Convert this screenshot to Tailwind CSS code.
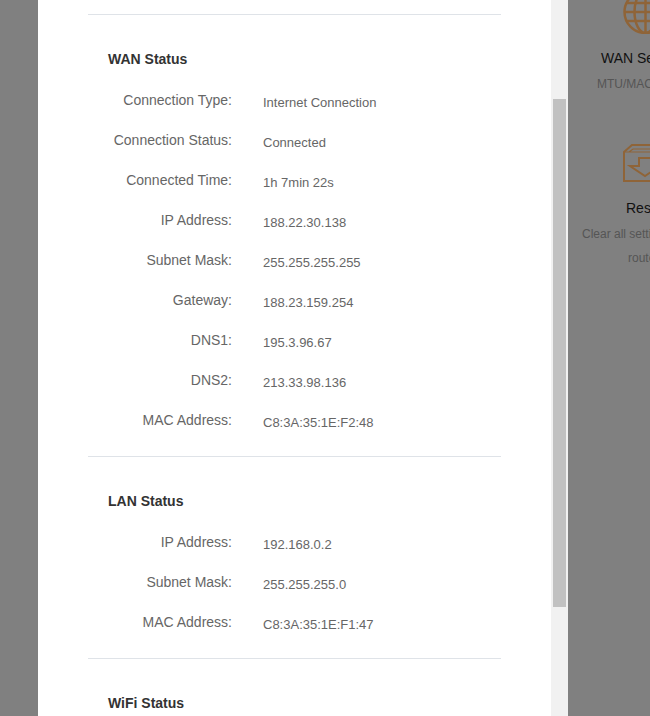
<!DOCTYPE html>
<html lang="en">
<head>
    <meta charset="UTF-8" />
    <script src="https://cdn.jsdelivr.net/npm/@tailwindcss/browser@4"></script>
    <title>Status</title>
</head>
<body class="relative h-[716px] w-[650px] overflow-hidden bg-[#808080] font-['Liberation_Sans',Arial,sans-serif]">
    <!-- dimmed page behind the dialog -->
    <div class="absolute left-[568px] top-0 h-[716px] w-[82px] overflow-hidden">
        <svg class="absolute left-[55px] top-[-18px]" width="46" height="52" viewBox="0 0 46 52" fill="none" stroke="#8f6438" stroke-width="2.5">
            <circle cx="22.5" cy="30" r="21" />
            <ellipse cx="22.5" cy="30" rx="11" ry="21" />
            <path d="M22.5 9v42M1.5 30h42M4 21h37M4 39h37" />
        </svg>
        <p class="absolute left-[33px] top-[50px] whitespace-nowrap text-[14px] leading-[16px] text-[#111]">WAN Settings</p>
        <p class="absolute left-[29px] top-[76px] whitespace-nowrap text-[12px] leading-[16px] text-[#555]">MTU/MAC Clone</p>
        <svg class="absolute left-[55px] top-[144px]" width="44" height="40" viewBox="0 0 44 40" fill="none" stroke="#8f6438" stroke-width="2">
            <path d="M44 1H9L1 8v29h43" />
            <path d="M1 8h43M6 8l4-3h34" stroke-width="1.2" />
            <path d="M16 14h12v8h9L22 32 7 22h9z" />
        </svg>
        <p class="absolute left-[58px] top-[200px] whitespace-nowrap text-[14px] leading-[16px] text-[#111]">Reset</p>
        <p class="absolute left-[14px] top-[226px] whitespace-nowrap text-[12px] leading-[16px] text-[#555]">Clear all settings of the</p>
        <p class="absolute left-[60px] top-[250px] whitespace-nowrap text-[12px] leading-[16px] text-[#555]">router</p>
    </div>

    <!-- dialog -->
    <div class="absolute left-[38px] top-0 flex h-[716px] w-[530px]">
        <div class="h-full w-[513px] bg-white px-[50px] pt-[14px]">
            <section class="border-t border-[#dfe3e8] pl-[20px] pt-[36px]">
                <h2 class="text-[14px] font-bold leading-[16px] text-[#333]">WAN Status</h2>
                <div class="mt-[23px] flex flex-col">
                    <div class="flex h-[40px]"><span class="w-[124px] pt-[2px] text-right text-[14px] leading-[16px] text-[#666]">Connection Type:</span><span class="ml-[31px] pt-[5px] text-[13px] leading-[16px] text-[#666]">Internet Connection</span></div>
                    <div class="flex h-[40px]"><span class="w-[124px] whitespace-nowrap pt-[2px] text-right text-[14px] leading-[16px] text-[#666]">Connection Status:</span><span class="ml-[31px] pt-[5px] text-[13px] leading-[16px] text-[#666]">Connected</span></div>
                    <div class="flex h-[40px]"><span class="w-[124px] pt-[2px] text-right text-[14px] leading-[16px] text-[#666]">Connected Time:</span><span class="ml-[31px] pt-[5px] text-[13px] leading-[16px] text-[#666]">1h 7min 22s</span></div>
                    <div class="flex h-[40px]"><span class="w-[124px] pt-[2px] text-right text-[14px] leading-[16px] text-[#666]">IP Address:</span><span class="ml-[31px] pt-[5px] text-[13px] leading-[16px] text-[#666]">188.22.30.138</span></div>
                    <div class="flex h-[40px]"><span class="w-[124px] pt-[2px] text-right text-[14px] leading-[16px] text-[#666]">Subnet Mask:</span><span class="ml-[31px] pt-[5px] text-[13px] leading-[16px] text-[#666]">255.255.255.255</span></div>
                    <div class="flex h-[40px]"><span class="w-[124px] pt-[2px] text-right text-[14px] leading-[16px] text-[#666]">Gateway:</span><span class="ml-[31px] pt-[5px] text-[13px] leading-[16px] text-[#666]">188.23.159.254</span></div>
                    <div class="flex h-[40px]"><span class="w-[124px] pt-[2px] text-right text-[14px] leading-[16px] text-[#666]">DNS1:</span><span class="ml-[31px] pt-[5px] text-[13px] leading-[16px] text-[#666]">195.3.96.67</span></div>
                    <div class="flex h-[40px]"><span class="w-[124px] pt-[2px] text-right text-[14px] leading-[16px] text-[#666]">DNS2:</span><span class="ml-[31px] pt-[5px] text-[13px] leading-[16px] text-[#666]">213.33.98.136</span></div>
                    <div class="flex h-[40px]"><span class="w-[124px] pt-[2px] text-right text-[14px] leading-[16px] text-[#666]">MAC Address:</span><span class="ml-[31px] pt-[5px] text-[13px] leading-[16px] text-[#666]">C8:3A:35:1E:F2:48</span></div>
                </div>
            </section>
            <section class="mt-[6px] border-t border-[#dfe3e8] pl-[20px] pt-[36px]">
                <h2 class="text-[14px] font-bold leading-[16px] text-[#333]">LAN Status</h2>
                <div class="mt-[23px] flex flex-col">
                    <div class="flex h-[40px]"><span class="w-[124px] pt-[2px] text-right text-[14px] leading-[16px] text-[#666]">IP Address:</span><span class="ml-[31px] pt-[5px] text-[13px] leading-[16px] text-[#666]">192.168.0.2</span></div>
                    <div class="flex h-[40px]"><span class="w-[124px] pt-[2px] text-right text-[14px] leading-[16px] text-[#666]">Subnet Mask:</span><span class="ml-[31px] pt-[5px] text-[13px] leading-[16px] text-[#666]">255.255.255.0</span></div>
                    <div class="flex h-[40px]"><span class="w-[124px] pt-[2px] text-right text-[14px] leading-[16px] text-[#666]">MAC Address:</span><span class="ml-[31px] pt-[5px] text-[13px] leading-[16px] text-[#666]">C8:3A:35:1E:F1:47</span></div>
                </div>
            </section>
            <section class="mt-[6px] border-t border-[#dfe3e8] pl-[20px] pt-[36px]">
                <h2 class="text-[14px] font-bold leading-[16px] text-[#333]">WiFi Status</h2>
            </section>
        </div>
        <!-- scrollbar -->
        <div class="h-full w-[17px] bg-[#f1f1f1] pl-[2px] pt-[99px]">
            <div class="h-[508px] w-[13px] bg-[#c1c1c1]"></div>
        </div>
    </div>
</body>
</html>
